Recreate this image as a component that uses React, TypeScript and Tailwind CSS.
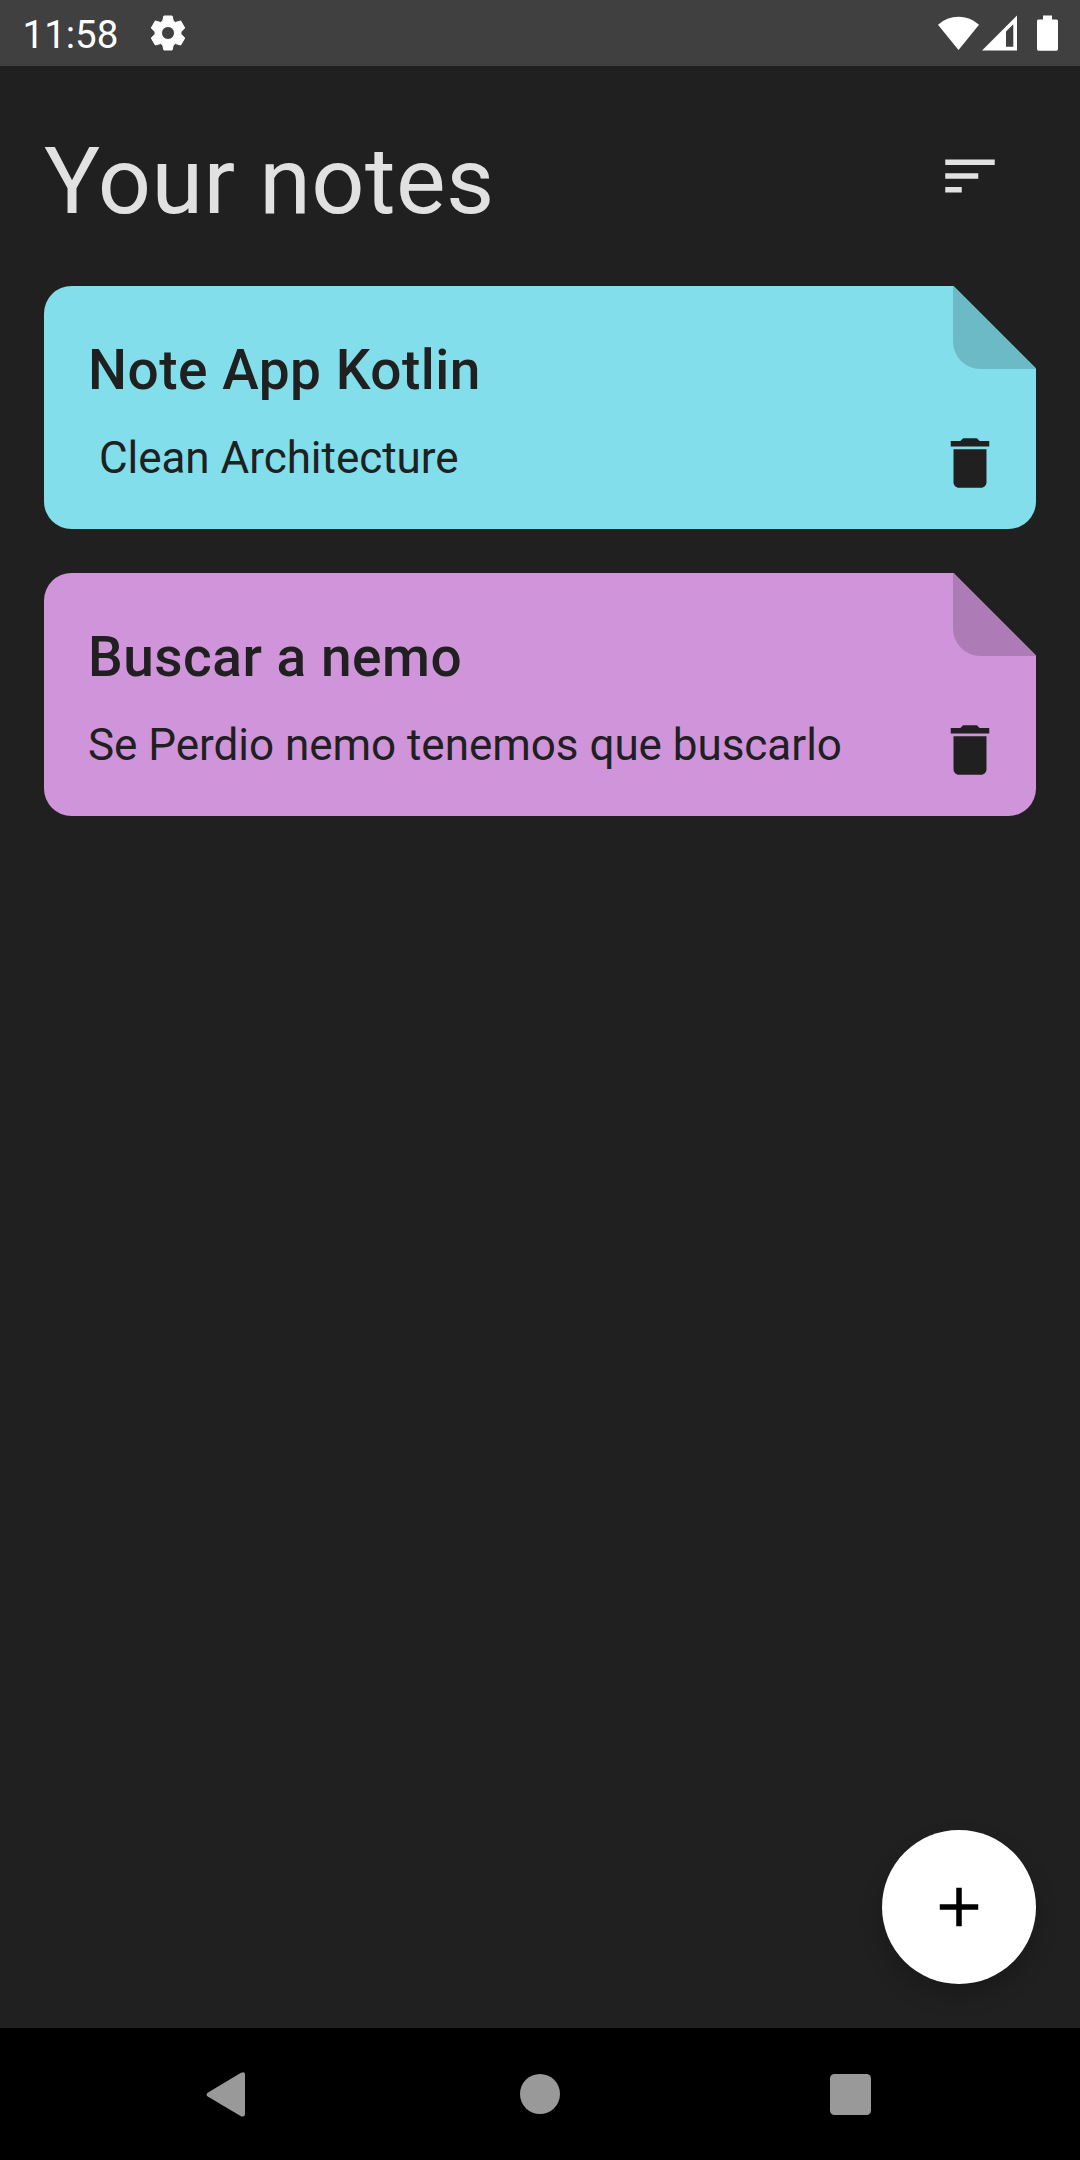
import type { ReactNode } from 'react';

type Note = { title: string; body: string; card: string; fold: string };

const notes: Note[] = [
  {
    title: 'Note App Kotlin',
    body: ' Clean Architecture',
    card: 'bg-[#81deea]',
    fold: 'bg-[#6cbac5]',
  },
  {
    title: 'Buscar a nemo',
    body: 'Se Perdio nemo tenemos que buscarlo',
    card: 'bg-[#cf94da]',
    fold: 'bg-[#ad7cb6]',
  },
];

function MaterialIcon({ d, className }: { d: string; className: string }) {
  return (
    <svg viewBox="0 0 24 24" fill="currentColor" className={className}>
      <path d={d} />
    </svg>
  );
}

const SORT = 'M3 18h6v-2H3v2zM3 6v2h18V6H3zm0 7h12v-2H3v2z';
const DELETE = 'M6 19c0 1.1.9 2 2 2h8c1.1 0 2-.9 2-2V7H6v12zM19 4h-3.5l-1-1h-5l-1 1H5v2h14V4z';
const ADD = 'M19 13h-6v6h-2v-6H5v-2h6V5h2v6h6v2z';

function GearIcon({ className }: { className: string }) {
  return (
    <svg viewBox="-63 -63 126 126" className={className}>
      <path
        fill="currentColor"
        stroke="currentColor"
        strokeWidth="3"
        strokeLinejoin="round"
        fillRule="evenodd"
        d="M-16-35.500-12.300-51H12.300L16-35.500 22.800-31.700 38.100-36.100 50.300-14.900 38.800-3.900V3.900L50.300 14.900 38.100 36.100 22.800 31.700 16 35.500 12.300 51H-12.300L-16 35.500-22.800 31.700-38.100 36.100-50.300 14.900-38.800 3.900V-3.900L-50.300-14.900-38.100-36.100-22.800-31.700ZM0-19.500A19.500 19.500 0 1 0 0 19.500 19.500 19.500 0 1 0 0-19.500Z"
      />
    </svg>
  );
}

function StatusBar() {
  return (
    <div className="flex h-[66px] shrink-0 items-center bg-[#404040] pr-[22px] pl-[22.5px] text-white">
      <span className="pt-[4px] text-[38.5px] leading-[62px]">11:58</span>
      <GearIcon className="ml-[28.5px] size-[42px]" />
      <svg viewBox="0 0 42 36" fill="currentColor" className="ml-auto h-9 w-[42px]">
        <path d="M20.500 35 L0 9.800 A30 30 0 0 1 41 9.800 Z" />
      </svg>
      <svg viewBox="0 0 36 36" fill="currentColor" className="ml-[2px] size-9">
        <path fillRule="evenodd" d="M0 35.500 L35 .5 V35.500 Z M24 16.500 V31.700 H31.300 V9.200 Z" />
      </svg>
      <svg viewBox="0 0 21 36" fill="currentColor" className="ml-[19px] h-9 w-[21px]">
        <path d="M6 .5h9v4h4.500q1.500 0 1.500 1.500v28q0 1.700-1.500 1.700h-18Q0 35.700 0 34V6q0-1.500 1.500-1.500H6z" />
      </svg>
    </div>
  );
}

function IconButton({ label, children }: { label: string; children: ReactNode }) {
  return (
    <button aria-label={label} className="flex size-[132px] shrink-0 items-center justify-center">
      {children}
    </button>
  );
}

function NoteCard({ note }: { note: Note }) {
  return (
    <article
      className={`relative flex h-[243px] items-end rounded-[27.5px] text-[#202020] [clip-path:polygon(0_0,calc(100%-82.5px)_0,100%_82.5px,100%_100%,0_100%)] ${note.card}`}
    >
      <div className={`absolute top-0 right-0 h-[82.5px] w-[83px] rounded-bl-[27.5px] ${note.fold}`} />
      <div className="min-w-0 flex-1 py-11 pl-11">
        <h2 className="text-[55px] leading-[80px] font-medium tracking-[0.5px]">{note.title}</h2>
        <p className="mt-[22px] text-[44px] leading-[53px] tracking-[-0.03px] whitespace-pre">{note.body}</p>
      </div>
      <IconButton label="Delete note">
        <MaterialIcon d={DELETE} className="size-[66px]" />
      </IconButton>
    </article>
  );
}

function NavigationBar() {
  return (
    <nav className="grid h-[132px] shrink-0 grid-cols-[310px_310px_310px] items-center justify-center bg-black text-[#999999]">
      <svg viewBox="0 0 42 48" fill="currentColor" className="ml-[130px] h-12 w-[42px]">
        <path d="M2.700 22.800 36 2.700Q40 1 40 4.500V44Q40 47.500 36 46.300L2.700 26.500Q.3 24.700 2.700 22.800Z" />
      </svg>
      <div className="size-10 justify-self-center rounded-full bg-current" />
      <div className="ml-[135px] size-[41px] rounded-[4.5px] bg-current" />
    </nav>
  );
}

export default function App() {
  return (
    <div className="flex h-[2160px] w-[1080px] flex-col overflow-hidden bg-[#202020] font-['Roboto',sans-serif]">
      <StatusBar />
      <main className="flex flex-1 flex-col p-11">
        <header className="flex h-[132px] items-center justify-between text-[#e1e1e1]">
          <h1 className="pt-[10px] text-[93.5px] leading-[110px] tracking-[0.45px]">Your notes</h1>
          <IconButton label="Sort">
            <MaterialIcon d={SORT} className="size-[66px]" />
          </IconButton>
        </header>
        <section className="mt-11 flex flex-col gap-11">
          {notes.map((note) => (
            <NoteCard key={note.title} note={note} />
          ))}
        </section>
        <button
          aria-label="Add note"
          className="mt-auto flex size-[154px] items-center justify-center self-end rounded-full bg-white text-black shadow-[0_12px_22px_rgba(0,0,0,0.2)]"
        >
          <MaterialIcon d={ADD} className="size-[66px]" />
        </button>
      </main>
      <NavigationBar />
    </div>
  );
}
